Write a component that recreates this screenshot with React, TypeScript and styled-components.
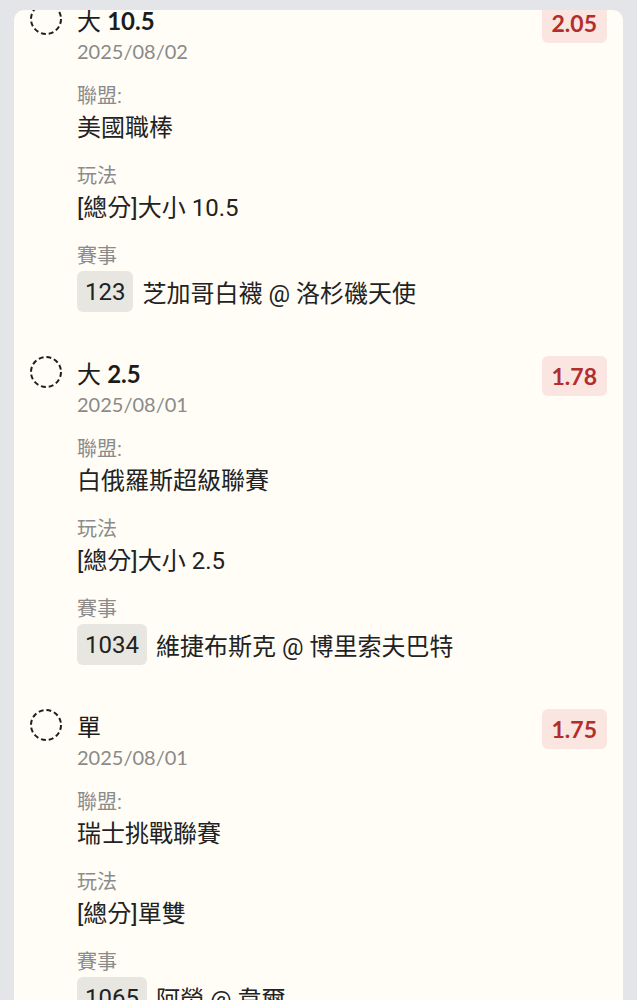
import React from "react";
import styled, { createGlobalStyle } from "styled-components";

const GlobalStyle = createGlobalStyle`
  html, body {
    margin: 0;
    padding: 0;
    background: #e4e5e9;
  }
  body {
    font-family: Roboto, "Noto Sans CJK TC", sans-serif;
    -webkit-font-smoothing: antialiased;
  }
  * { box-sizing: border-box; }
`;

const Page = styled.div`
  height: 1000px;
  padding: 10px 14px 0;
  overflow: hidden;
`;

const Card = styled.div`
  background: #fffdf6;
  border-radius: 10px 10px 0 0;
  height: 990px;
  overflow: hidden;
`;

const List = styled.div`
  margin-top: -4px;
  display: flex;
  flex-direction: column;
  gap: 47px;
`;

const Item = styled.div`
  display: grid;
  grid-template-columns: 32px 1fr auto;
  column-gap: 15px;
  padding: 0 16px 0 16px;
  align-items: start;
`;

const Circle = styled.svg`
  display: block;
  width: 32px;
  height: 32px;
  margin-top: -3px;
`;

const Content = styled.div`
  display: flex;
  flex-direction: column;
  min-width: 0;
`;

const Title = styled.div`
  font-family: Lato, "Noto Sans CJK TC", sans-serif;
  font-size: 24px;
  line-height: 30px;
  color: #1c1c1c;
  white-space: nowrap;
`;

const Line = styled.span`
  font-weight: 700;
`;

const DateText = styled.div`
  font-family: Lato, sans-serif;
  font-size: 20px;
  line-height: 30px;
  color: #8a8a8a;
`;

const Fields = styled.div`
  margin-top: 16px;
  display: flex;
  flex-direction: column;
  gap: 16px;
`;

const Field = styled.div`
  display: flex;
  flex-direction: column;
`;

const Label = styled.div`
  font-size: 20px;
  line-height: 28px;
  color: #8b8b8b;
`;

const Value = styled.div`
  font-size: 24px;
  line-height: 36px;
  color: #222;
  white-space: nowrap;
`;

const MatchRow = styled.div`
  margin-top: 1px;
  display: flex;
  align-items: center;
  gap: 9px;
  font-size: 24px;
  color: #222;
  white-space: nowrap;
`;

const Chip = styled.span`
  display: inline-flex;
  align-items: center;
  height: 41px;
  padding: 0 8px;
  border-radius: 6px;
  background: #e7e6e1;
  color: #222;
`;

const Odds = styled.div`
  margin-top: -3px;
  height: 40px;
  padding: 0 10px;
  display: flex;
  align-items: center;
  border-radius: 6px;
  background: #fae5e0;
  color: #b22d2d;
  font-family: Lato, sans-serif;
  font-weight: 700;
  font-size: 23px;
`;

type Bet = {
  pick: string;
  line?: string;
  date: string;
  odds: string;
  league: string;
  play: string;
  id: string;
  match: string;
};

const bets: Bet[] = [
  {
    pick: "大",
    line: "10.5",
    date: "2025/08/02",
    odds: "2.05",
    league: "美國職棒",
    play: "[總分]大小 10.5",
    id: "123",
    match: "芝加哥白襪 @ 洛杉磯天使",
  },
  {
    pick: "大",
    line: "2.5",
    date: "2025/08/01",
    odds: "1.78",
    league: "白俄羅斯超級聯賽",
    play: "[總分]大小 2.5",
    id: "1034",
    match: "維捷布斯克 @ 博里索夫巴特",
  },
  {
    pick: "單",
    date: "2025/08/01",
    odds: "1.75",
    league: "瑞士挑戰聯賽",
    play: "[總分]單雙",
    id: "1065",
    match: "阿勞 @ 韋爾",
  },
];

const DashedCircle = () => (
  <Circle viewBox="0 0 32 32">
    <circle
      cx="16"
      cy="16"
      r="15"
      fill="none"
      stroke="#1e1e1e"
      strokeWidth="2"
      strokeDasharray="4.9 2.95"
    />
  </Circle>
);

export default function App() {
  return (
    <>
      <GlobalStyle />
      <Page>
        <Card>
          <List>
            {bets.map((b, i) => (
              <Item key={i}>
                <DashedCircle />
                <Content>
                  <Title>
                    {b.pick}
                    {b.line ? <> <Line>{b.line}</Line></> : null}
                  </Title>
                  <DateText>{b.date}</DateText>
                  <Fields>
                    <Field>
                      <Label>聯盟:</Label>
                      <Value>{b.league}</Value>
                    </Field>
                    <Field>
                      <Label>玩法</Label>
                      <Value>{b.play}</Value>
                    </Field>
                    <Field>
                      <Label>賽事</Label>
                      <MatchRow>
                        <Chip>{b.id}</Chip>
                        <span>{b.match}</span>
                      </MatchRow>
                    </Field>
                  </Fields>
                </Content>
                <Odds>{b.odds}</Odds>
              </Item>
            ))}
          </List>
        </Card>
      </Page>
    </>
  );
}
